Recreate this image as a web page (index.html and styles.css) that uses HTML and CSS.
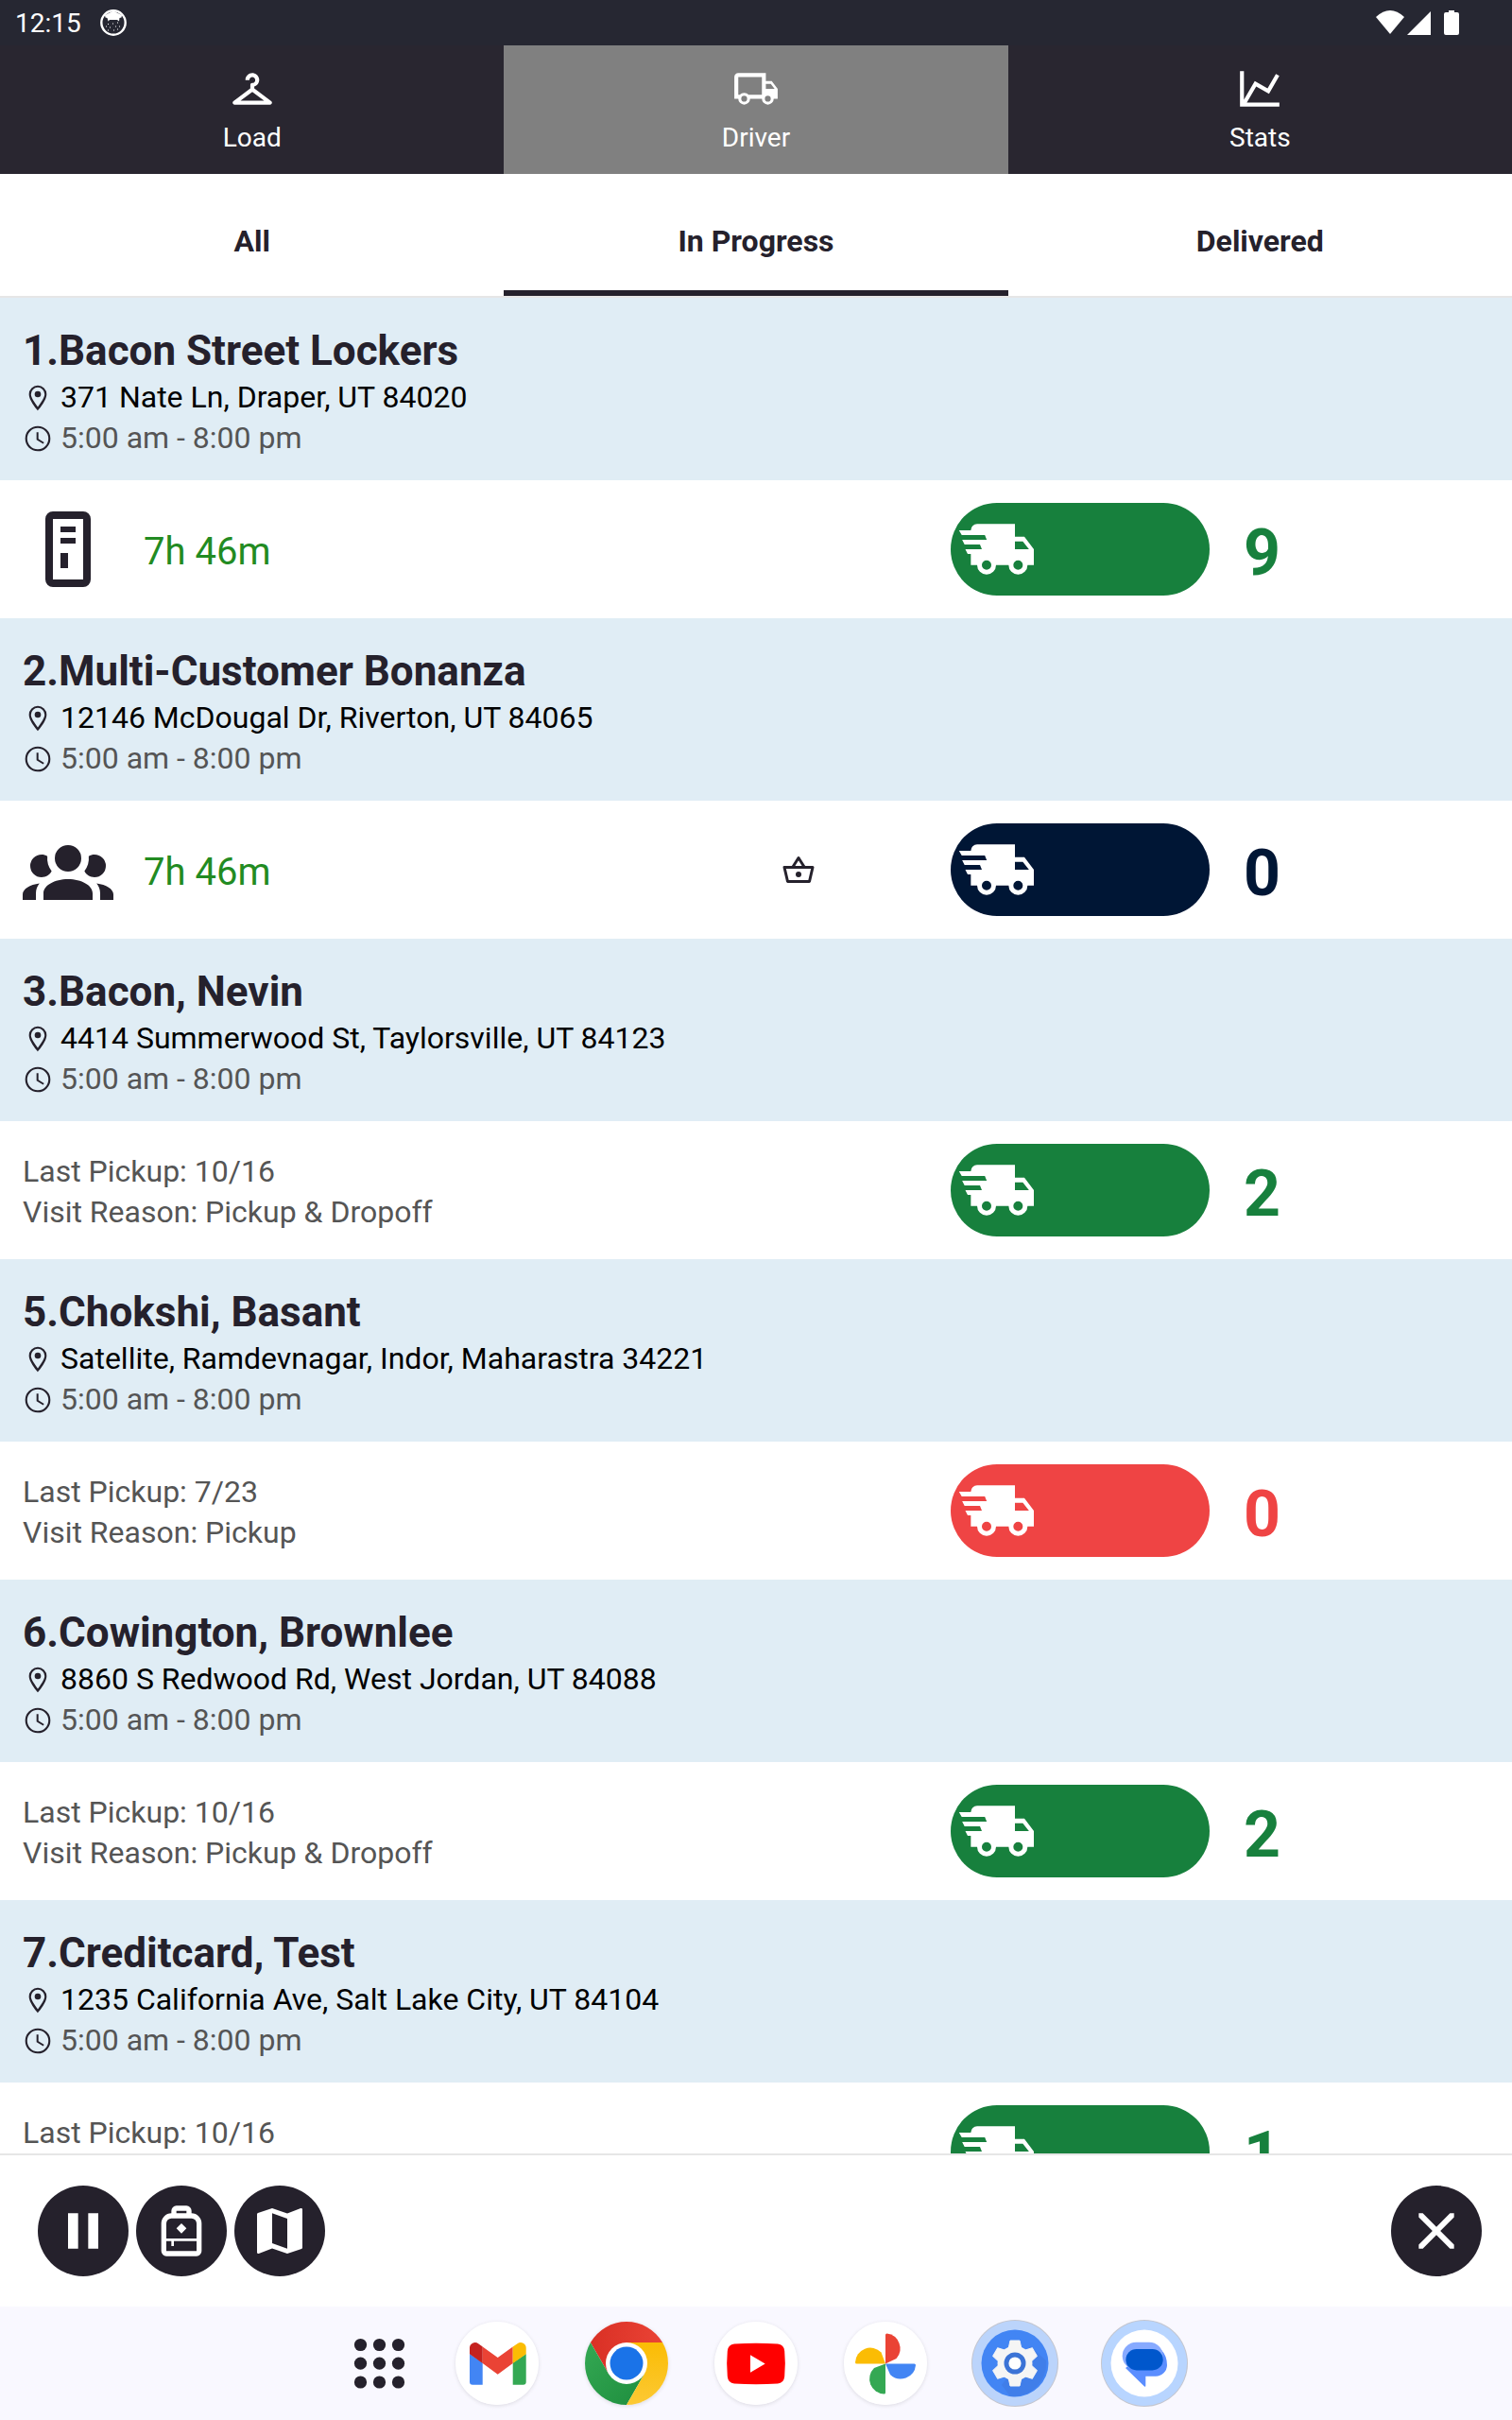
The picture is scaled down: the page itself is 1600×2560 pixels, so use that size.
FILE: index.html
```html
<!DOCTYPE html>
<html lang="en">
<head>
<meta charset="utf-8">
<meta name="viewport" content="width=device-width, initial-scale=1">
<title>Driver</title>
<link rel="stylesheet" href="styles.css">
</head>
<body>
<svg class="sprite" aria-hidden="true">
  <symbol id="pin" viewBox="0 0 24 24"><path d="M12,6.5A2.5,2.5 0 0,1 14.5,9A2.5,2.5 0 0,1 12,11.5A2.5,2.5 0 0,1 9.5,9A2.5,2.5 0 0,1 12,6.5M12,2A7,7 0 0,1 19,9C19,14.25 12,22 12,22C12,22 5,14.25 5,9A7,7 0 0,1 12,2M12,3.6A5.4,5.4 0 0,0 6.6,9C6.6,10.5 7.2,12.5 12,19.2C16.8,12.5 17.4,10.5 17.4,9A5.4,5.4 0 0,0 12,3.6Z"/></symbol>
  <symbol id="clock" viewBox="0 0 24 24"><path d="M12,20.4A8.4,8.4 0 0,0 20.4,12A8.4,8.4 0 0,0 12,3.6A8.4,8.4 0 0,0 3.6,12A8.4,8.4 0 0,0 12,20.4M12,2A10,10 0 0,1 22,12A10,10 0 0,1 12,22C6.47,22 2,17.5 2,12A10,10 0 0,1 12,2M12.5,7V12.25L17,14.92L16.25,16.15L11,13V7H12.5Z"/></symbol>
  <symbol id="van" viewBox="0 0 24 24"><path fill-rule="evenodd" d="M3,13.5L2.25,12H7.5L6.9,10.5H2L1.25,9H9.05L8.45,7.5H1.11L0.25,6H4A2,2 0 0,1 6,4H18V8H21L24,12V17H22A3,3 0 0,1 19,20A3,3 0 0,1 16,17H12A3,3 0 0,1 9,20A3,3 0 0,1 6,17H4V13.5H3M19,18.5A1.5,1.5 0 0,0 20.5,17A1.5,1.5 0 0,0 19,15.5A1.5,1.5 0 0,0 17.5,17A1.5,1.5 0 0,0 19,18.5M20.5,9.5H18V12H22.46L20.5,9.5M9,18.5A1.5,1.5 0 0,0 10.5,17A1.5,1.5 0 0,0 9,15.5A1.5,1.5 0 0,0 7.5,17A1.5,1.5 0 0,0 9,18.5Z"/></symbol>
</svg>

<header class="status">
  <time class="status-time">12:15</time>
  <svg class="status-app" viewBox="0 0 28 28" aria-hidden="true"><circle cx="14" cy="14" r="12.7" fill="none" stroke="#fff" stroke-width="2.4"/><path d="M5 6L14 1.5 23 6 22.500 8.500 20.500 9 20 12.500 18 11 10 11 8.500 12.500 7.500 9 5.500 8.500z" fill="#fff"/><path d="M8 15.500h1M13 15h1M18 14h1M16 18h1M10 19h1M20 18h1M14 22h1M18 21h1M6 18h1M8 22h1" stroke="#fff" stroke-width="1"/></svg>
  <span class="status-spacer"></span>
  <svg class="status-signals" viewBox="0 0 88 26" fill="#fff" aria-hidden="true"><path d="M0 7Q15-7 30 7L15 25z"/><path d="M33 26L58 1V26z"/><path d="M77 0h6v2h3a2 2 0 0 1 2 2v20a2 2 0 0 1-2 2H74a2 2 0 0 1-2-2V4a2 2 0 0 1 2-2h3z"/></svg>
</header>

<nav class="nav" aria-label="Main">
  <button class="nav-item" type="button">
    <svg class="nav-icon" viewBox="0 0 24 24" aria-hidden="true"><path d="M21.600 18.200L13 11.750v-.910c1.650-.490 2.800-2.170 2.430-4.050-.260-1.310-1.300-2.400-2.610-2.700C10.540 3.570 8.500 5.300 8.500 7.500h2c0-.830.670-1.500 1.500-1.500s1.500.670 1.500 1.500c0 .840-.690 1.520-1.530 1.500-.540-.010-.970.450-.970.990v1.760L2.400 18.200c-.770.580-.360 1.800.600 1.800h18c.960 0 1.370-1.220.600-1.800zM6 18l6-4.500 6 4.500H6z"/></svg>
    Load
  </button>
  <button class="nav-item nav-item-active" type="button" aria-current="page">
    <svg class="nav-icon" viewBox="0 0 24 24" aria-hidden="true"><path fill-rule="evenodd" d="M18,18.5A1.5,1.5 0 0,0 19.5,17A1.5,1.5 0 0,0 18,15.5A1.5,1.5 0 0,0 16.5,17A1.5,1.5 0 0,0 18,18.5M19.5,9.5H17V12H21.46L19.5,9.5M6,18.5A1.5,1.5 0 0,0 7.5,17A1.5,1.5 0 0,0 6,15.5A1.5,1.5 0 0,0 4.5,17A1.5,1.5 0 0,0 6,18.5M20,8L23,12V17H21A3,3 0 0,1 18,20A3,3 0 0,1 15,17H9A3,3 0 0,1 6,20A3,3 0 0,1 3,17H1V6C1,4.89 1.89,4 3,4H17V8H20M3,6V15H3.76C4.31,14.39 5.11,14 6,14C6.89,14 7.69,14.39 8.24,15H15V6H3Z"/></svg>
    Driver
  </button>
  <button class="nav-item" type="button">
    <svg class="nav-icon" viewBox="0 0 24 24" aria-hidden="true"><path d="M16,11.78L20.24,4.45L21.97,5.45L16.74,14.5L10.23,10.75L5.46,19H22V21H2V3H4V17.54L9.5,8L16,11.78Z"/></svg>
    Stats
  </button>
</nav>

<div class="tabs" role="tablist">
  <button class="tab" type="button" role="tab" aria-selected="false">All</button>
  <button class="tab" type="button" role="tab" aria-selected="true">In Progress</button>
  <button class="tab" type="button" role="tab" aria-selected="false">Delivered</button>
</div>

<main class="stops">
  <article class="stop green">
    <header class="stop-head">
      <h2 class="stop-title">1.Bacon Street Lockers</h2>
      <p class="stop-line address"><svg class="line-icon" aria-hidden="true"><use href="#pin"/></svg>371 Nate Ln, Draper, UT 84020</p>
      <p class="stop-line"><svg class="line-icon" aria-hidden="true"><use href="#clock"/></svg>5:00 am - 8:00 pm</p>
    </header>
    <div class="stop-body">
      <div class="timer">
        <svg class="kind-icon" viewBox="0 0 96 96" aria-hidden="true"><path fill-rule="evenodd" d="M32 8H64a8 8 0 0 1 8 8V80a8 8 0 0 1-8 8H32a8 8 0 0 1-8-8V16a8 8 0 0 1 8-8zM32 16V80H64V16zM40 24H56v6H40zM40 36H56v6H40zM40 52h8V68h-8z"/></svg>
        <span class="timer-text">7h 46m</span>
      </div>
      <span class="extra"></span>
      <button class="pill" type="button" aria-label="Deliver"><svg class="van" aria-hidden="true"><use href="#van"/></svg></button>
      <strong class="count">9</strong>
    </div>
  </article>

  <article class="stop navy">
    <header class="stop-head">
      <h2 class="stop-title">2.Multi-Customer Bonanza</h2>
      <p class="stop-line address"><svg class="line-icon" aria-hidden="true"><use href="#pin"/></svg>12146 McDougal Dr, Riverton, UT 84065</p>
      <p class="stop-line"><svg class="line-icon" aria-hidden="true"><use href="#clock"/></svg>5:00 am - 8:00 pm</p>
    </header>
    <div class="stop-body">
      <div class="timer">
        <svg class="kind-icon" viewBox="0 0 24 24" aria-hidden="true"><path d="M12,5.5A3.5,3.5 0 0,1 15.5,9A3.5,3.5 0 0,1 12,12.5A3.5,3.5 0 0,1 8.5,9A3.5,3.5 0 0,1 12,5.5M5,8C5.56,8 6.08,8.15 6.53,8.42C6.38,9.85 6.8,11.27 7.66,12.38C7.16,13.34 6.16,14 5,14A3,3 0 0,1 2,11A3,3 0 0,1 5,8M19,8A3,3 0 0,1 22,11A3,3 0 0,1 19,14C17.84,14 16.84,13.34 16.34,12.38C17.2,11.27 17.62,9.85 17.47,8.42C17.92,8.15 18.44,8 19,8M5.5,18.25C5.5,16.18 8.41,14.5 12,14.5C15.59,14.5 18.5,16.18 18.5,18.25V20H5.5V18.25M0,20V18.5C0,17.11 1.89,15.94 4.45,15.6C3.86,16.28 3.5,17.22 3.5,18.25V20H0M24,20H20.5V18.25C20.5,17.22 20.14,16.28 19.55,15.6C22.11,15.94 24,17.11 24,18.5V20Z"/></svg>
        <span class="timer-text">7h 46m</span>
      </div>
      <span class="extra"><svg class="basket" viewBox="0 0 40 40" aria-hidden="true"><g fill="none" stroke="#25212c" stroke-width="3" stroke-linejoin="round"><path d="M5 17.500H35L31.500 32.500H8.500z"/><path d="M14 17L20 7.500 26 17"/></g><circle cx="20" cy="25" r="3" fill="#25212c"/></svg></span>
      <button class="pill" type="button" aria-label="Deliver"><svg class="van" aria-hidden="true"><use href="#van"/></svg></button>
      <strong class="count">0</strong>
    </div>
  </article>

  <article class="stop green">
    <header class="stop-head">
      <h2 class="stop-title">3.Bacon, Nevin</h2>
      <p class="stop-line address"><svg class="line-icon" aria-hidden="true"><use href="#pin"/></svg>4414 Summerwood St, Taylorsville, UT 84123</p>
      <p class="stop-line"><svg class="line-icon" aria-hidden="true"><use href="#clock"/></svg>5:00 am - 8:00 pm</p>
    </header>
    <div class="stop-body">
      <div class="notes"><p>Last Pickup: 10/16</p><p>Visit Reason: Pickup &amp; Dropoff</p></div>
      <span class="extra"></span>
      <button class="pill" type="button" aria-label="Deliver"><svg class="van" aria-hidden="true"><use href="#van"/></svg></button>
      <strong class="count">2</strong>
    </div>
  </article>

  <article class="stop red">
    <header class="stop-head">
      <h2 class="stop-title">5.Chokshi, Basant</h2>
      <p class="stop-line address"><svg class="line-icon" aria-hidden="true"><use href="#pin"/></svg>Satellite, Ramdevnagar, Indor, Maharastra 34221</p>
      <p class="stop-line"><svg class="line-icon" aria-hidden="true"><use href="#clock"/></svg>5:00 am - 8:00 pm</p>
    </header>
    <div class="stop-body">
      <div class="notes"><p>Last Pickup: 7/23</p><p>Visit Reason: Pickup</p></div>
      <span class="extra"></span>
      <button class="pill" type="button" aria-label="Deliver"><svg class="van" aria-hidden="true"><use href="#van"/></svg></button>
      <strong class="count">0</strong>
    </div>
  </article>

  <article class="stop green">
    <header class="stop-head">
      <h2 class="stop-title">6.Cowington, Brownlee</h2>
      <p class="stop-line address"><svg class="line-icon" aria-hidden="true"><use href="#pin"/></svg>8860 S Redwood Rd, West Jordan, UT 84088</p>
      <p class="stop-line"><svg class="line-icon" aria-hidden="true"><use href="#clock"/></svg>5:00 am - 8:00 pm</p>
    </header>
    <div class="stop-body">
      <div class="notes"><p>Last Pickup: 10/16</p><p>Visit Reason: Pickup &amp; Dropoff</p></div>
      <span class="extra"></span>
      <button class="pill" type="button" aria-label="Deliver"><svg class="van" aria-hidden="true"><use href="#van"/></svg></button>
      <strong class="count">2</strong>
    </div>
  </article>

  <article class="stop green">
    <header class="stop-head">
      <h2 class="stop-title">7.Creditcard, Test</h2>
      <p class="stop-line address"><svg class="line-icon" aria-hidden="true"><use href="#pin"/></svg>1235 California Ave, Salt Lake City, UT 84104</p>
      <p class="stop-line"><svg class="line-icon" aria-hidden="true"><use href="#clock"/></svg>5:00 am - 8:00 pm</p>
    </header>
    <div class="stop-body">
      <div class="notes"><p>Last Pickup: 10/16</p><p>Visit Reason: Pickup</p></div>
      <span class="extra"></span>
      <button class="pill" type="button" aria-label="Deliver"><svg class="van" aria-hidden="true"><use href="#van"/></svg></button>
      <strong class="count">1</strong>
    </div>
  </article>
</main>

<footer class="actions">
  <div class="action-group">
    <button class="round" type="button" aria-label="Pause"><svg class="round-icon" viewBox="0 0 24 24"><path d="M14,19H18V5H14M6,19H10V5H6V19Z"/></svg></button>
    <button class="round" type="button" aria-label="Bag"><svg class="round-icon" viewBox="0 0 24 24"><path fill-rule="evenodd" d="M16 5V4a2 2 0 0 0-2-2h-4a2 2 0 0 0-2 2v1a4 4 0 0 0-4 4v11a2 2 0 0 0 2 2h12a2 2 0 0 0 2-2V9a4 4 0 0 0-4-4M10 4h4v1h-4zM6 15V9a2 2 0 0 1 2-2h8a2 2 0 0 1 2 2v6zM6 16h2v2h1v-2h9v4H6zM12 9l2 2-2 2-2-2z"/></svg></button>
    <button class="round" type="button" aria-label="Map"><svg class="round-icon" viewBox="0 0 24 24"><path fill-rule="evenodd" d="M15,19L9,16.89V5L15,7.11M20.5,3C20.44,3 20.39,3 20.34,3L15,5.1L9,3L3.36,4.9C3.15,4.97 3,5.15 3,5.38V20.5A0.5,0.5 0 0,0 3.5,21L3.66,20.97L9,18.9L15,21L20.64,19.1C20.85,19.03 21,18.85 21,18.62V3.5A0.5,0.5 0 0,0 20.5,3Z"/></svg></button>
  </div>
  <button class="round" type="button" aria-label="Close"><svg class="round-icon" viewBox="0 0 24 24"><path d="M5 5h1.600L12 10.450 17.400 5H19v1.600L13.550 12 19 17.400V19h-1.600L12 13.550 6.600 19H5v-1.600L10.450 12 5 6.600z"/></svg></button>
</footer>

<nav class="dock" aria-label="Apps">
  <button class="dock-all" type="button" aria-label="All apps"><svg viewBox="0 0 64 64" fill="#474752"><circle cx="12.500" cy="12.500" r="6.600"/><circle cx="32.500" cy="12.500" r="6.600"/><circle cx="52.500" cy="12.500" r="6.600"/><circle cx="12.500" cy="32.200" r="6.600"/><circle cx="32.500" cy="32.200" r="6.600"/><circle cx="52.500" cy="32.200" r="6.600"/><circle cx="12.500" cy="52" r="6.600"/><circle cx="32.500" cy="52" r="6.600"/><circle cx="52.500" cy="52" r="6.600"/></svg></button>
  <button class="dock-app" type="button" aria-label="Gmail"><svg viewBox="0 0 88 88"><circle cx="44" cy="44" r="44" fill="#fff"/><path fill="#4285f4" d="M15 34L28.700 43.500V66.700H18a3 3 0 0 1-3-3z"/><path fill="#34a853" d="M74.700 34L60.700 43.500V66.700H71.700a3 3 0 0 0 3-3z"/><path fill="#ea4335" d="M28.700 26.500L44.700 38 60.700 26.500V44L44.700 55.700 28.700 44z"/><path fill="#c5221f" d="M15 34.300V28a5.700 5.700 0 0 1 9.200-4.800L28.700 26.500V44z"/><path fill="#fbbc04" d="M74.700 34.300V28a5.700 5.700 0 0 0-9.200-4.800L60.700 26.500V44z"/></svg></button>
  <button class="dock-app" type="button" aria-label="Chrome"><svg viewBox="0 0 88 88"><defs><linearGradient id="cr"><stop stop-color="#d93025"/><stop offset="1" stop-color="#ea4335"/></linearGradient><linearGradient id="cg" x1="0" y1="0" x2="1" y2="1"><stop stop-color="#34a853"/><stop offset="1" stop-color="#1e8e3e"/></linearGradient><linearGradient id="cy" x1="0" y1="1" x2="0" y2="0"><stop stop-color="#fcc934"/><stop offset="1" stop-color="#fbbc04"/></linearGradient></defs><path fill="url(#cr)" d="M5.900 22A44 44 0 0 1 82.100 22H44L24.950 55z"/><path fill="url(#cg)" d="M5.900 22L24.950 55H63L44 88A44 44 0 0 1 5.900 22z"/><path fill="url(#cy)" d="M82.100 22H44L63 55 44 88A44 44 0 0 0 82.100 22z"/><circle cx="44" cy="44" r="22" fill="#fff"/><circle cx="44" cy="44" r="17.500" fill="#1a73e8"/></svg></button>
  <button class="dock-app" type="button" aria-label="YouTube"><svg viewBox="0 0 88 88"><circle cx="44" cy="44" r="44" fill="#fff"/><path fill="#f00" d="M21 23.500Q44 22 67 23.500 73.500 24 74.200 31 75.500 44 74.200 58 73.500 65 67 65.500 44 67 21 65.500 14.500 65 13.800 58 12.500 44 13.800 31 14.500 24 21 23.500z"/><path fill="#fff" d="M38 35.300L53.700 44.500 38 53.700z"/></svg></button>
  <button class="dock-app" type="button" aria-label="Photos"><svg viewBox="0 0 88 88"><circle cx="44" cy="44" r="44" fill="#fff"/><path fill="#ea4335" d="M44 44.500V14q0-1.500 1.500-1.500a16 16 0 0 1 10 26.500z"/><path fill="#4285f4" d="M44 44.500H74.500q1.500 0 1.500 1.500a16 16 0 0 1-27 10z"/><path fill="#34a853" d="M44 44.500V75q0 1.500-1.500 1.500A16 16 0 0 1 32 49z"/><path fill="#fbbc04" d="M44 44.500H13.500q-1.500 0-1.500-1.500A16 16 0 0 1 39.500 32.500z"/></svg></button>
  <button class="dock-app dock-ring" type="button" aria-label="Settings"><svg viewBox="-44 -44 88 88"><circle r="45" fill="#bbd4fb"/><circle r="35.500" fill="#4285f4"/><path d="M16-18L33-3A35 35 0 0 1-5 35L-14 23z" fill="#3d78dd" opacity=".5"/><g fill="#f5f5f5"><circle r="18.500"/><path id="tooth" stroke="#f5f5f5" stroke-width="1" stroke-linejoin="round" d="M-5-24H5L7-15H-7z"/><use href="#tooth" transform="rotate(60)"/><use href="#tooth" transform="rotate(120)"/><use href="#tooth" transform="rotate(180)"/><use href="#tooth" transform="rotate(240)"/><use href="#tooth" transform="rotate(300)"/></g><circle r="11.500" fill="#3b73d6"/><circle r="6.600" fill="#fff"/></svg></button>
  <button class="dock-app dock-ring" type="button" aria-label="Messages"><svg viewBox="-44 -44 88 88"><circle r="45" fill="#b8d5ff"/><circle r="35.500" fill="#fff"/><path fill="#5b8eff" d="M-20 5L0 24.500Q1.300 25.500 1.300 23.500V13.700H12A12 12 0 0 0 24 2Q24-8 18-14L-14 0z"/><rect x="-23.300" y="-22.300" width="43" height="29" rx="14.500" fill="#87aaff"/><rect x="-19.600" y="-15" width="39.300" height="22.400" rx="11.200" fill="#0057cc"/></svg></button>
</nav>
</body>
</html>
```

FILE: styles.css
```css
* {
  box-sizing: border-box;
}

body {
  display: flex;
  flex-direction: column;
  height: 100vh;
  margin: 0;
  background: #fff;
  color: #25212c;
  font-family: Roboto, sans-serif;
  font-size: 32px;
  line-height: 43px;
}

h2,
p {
  margin: 0;
}

button {
  border: 0;
  padding: 0;
  background: none;
  color: inherit;
  font: inherit;
  cursor: pointer;
}

svg {
  display: block;
  flex: none;
  fill: currentColor;
}

.sprite {
  position: absolute;
  width: 0;
  height: 0;
}

/* System status bar */
.status {
  display: flex;
  flex: none;
  align-items: center;
  gap: 20px;
  height: 48px;
  padding: 0 56px 0 16px;
  background: #262732;
  color: #fff;
  font-size: 28px;
  line-height: 36px;
}

.status-time {
  padding-top: 2px;
}

.status-app {
  width: 28px;
  height: 28px;
}

.status-spacer {
  flex: 1;
}

.status-signals {
  width: 88px;
  height: 26px;
}

/* Main navigation */
.nav {
  display: grid;
  flex: none;
  grid-template-columns: repeat(3, 1fr);
  background: #292630;
  color: #fff;
}

.nav-item {
  display: flex;
  flex-direction: column;
  align-items: center;
  gap: 9px;
  padding: 21px 0 20px;
  font-size: 28px;
  line-height: 36px;
}

.nav-item-active {
  background: #808080;
}

.nav-icon {
  width: 50px;
  height: 50px;
}

/* Filter tabs */
.tabs {
  display: grid;
  flex: none;
  grid-template-columns: repeat(3, 1fr);
  border-bottom: 2px solid #e6e6e6;
}

.tab {
  padding: 50px 0 30px;
  border-bottom: 6px solid transparent;
  font-weight: 700;
}

.tab[aria-selected="true"] {
  border-bottom-color: #25212c;
}

/* Stop list */
.stops {
  flex: 1;
  min-height: 0;
  overflow-y: auto;
  scrollbar-width: none;
}

.green {
  --accent: #17803d;
}

.navy {
  --accent: #001635;
}

.red {
  --accent: #ef4444;
}

.stop-head {
  padding: 28px 24px 23px;
  background: #e0edf5;
}

.stop-title {
  font-size: 44px;
  font-weight: 700;
  line-height: 56px;
}

.stop-line {
  display: flex;
  align-items: center;
  gap: 8px;
  color: #555;
}

.address {
  color: #000;
}

.line-icon {
  width: 32px;
  height: 32px;
  color: #25212c;
}

.stop-body {
  display: grid;
  grid-template-columns: 1fr 322px 274px 320px;
  align-items: center;
  padding: 24px 0 24px 24px;
}

.timer {
  display: flex;
  align-items: center;
  gap: 32px;
}

.kind-icon {
  width: 96px;
  height: 96px;
}

.timer-text {
  padding-top: 4px;
  color: #228b22;
  font-size: 40px;
}

.notes {
  padding-top: 4px;
  color: #555;
}

.extra {
  display: flex;
  justify-content: center;
}

.basket {
  width: 40px;
  height: 40px;
}

.pill {
  display: flex;
  align-items: center;
  height: 98px;
  padding-left: 8px;
  border-radius: 49px;
  background: var(--accent);
  color: #fff;
}

.van {
  width: 80px;
  height: 80px;
}

.count {
  padding: 8px 0 0 36px;
  color: var(--accent);
  font-size: 68px;
  font-weight: 700;
  line-height: 80px;
}

/* Action bar */
.actions {
  display: flex;
  flex: none;
  justify-content: space-between;
  padding: 32px 32px 32px 40px;
  border-top: 2px solid #e6e6e6;
  background: #fff;
}

.action-group {
  display: flex;
  gap: 8px;
}

.round {
  display: flex;
  align-items: center;
  justify-content: center;
  width: 96px;
  height: 96px;
  border-radius: 50%;
  background: #25212c;
  color: #fff;
}

.round-icon {
  width: 64px;
  height: 64px;
}

/* System dock */
.dock {
  display: flex;
  flex: none;
  align-items: center;
  justify-content: center;
  gap: 49px;
  height: 120px;
  padding-left: 24px;
  background: #f9f8ff;
}

.dock-all {
  width: 64px;
  height: 64px;
}

.dock-app {
  width: 88px;
  height: 88px;
  border-radius: 50%;
  box-shadow: 0 1px 4px rgba(0, 0, 0, 0.12);
}

.dock-app svg {
  overflow: visible;
}

.dock-ring {
  box-shadow: 0 0 0 2px #c4c6cf;
}
```
